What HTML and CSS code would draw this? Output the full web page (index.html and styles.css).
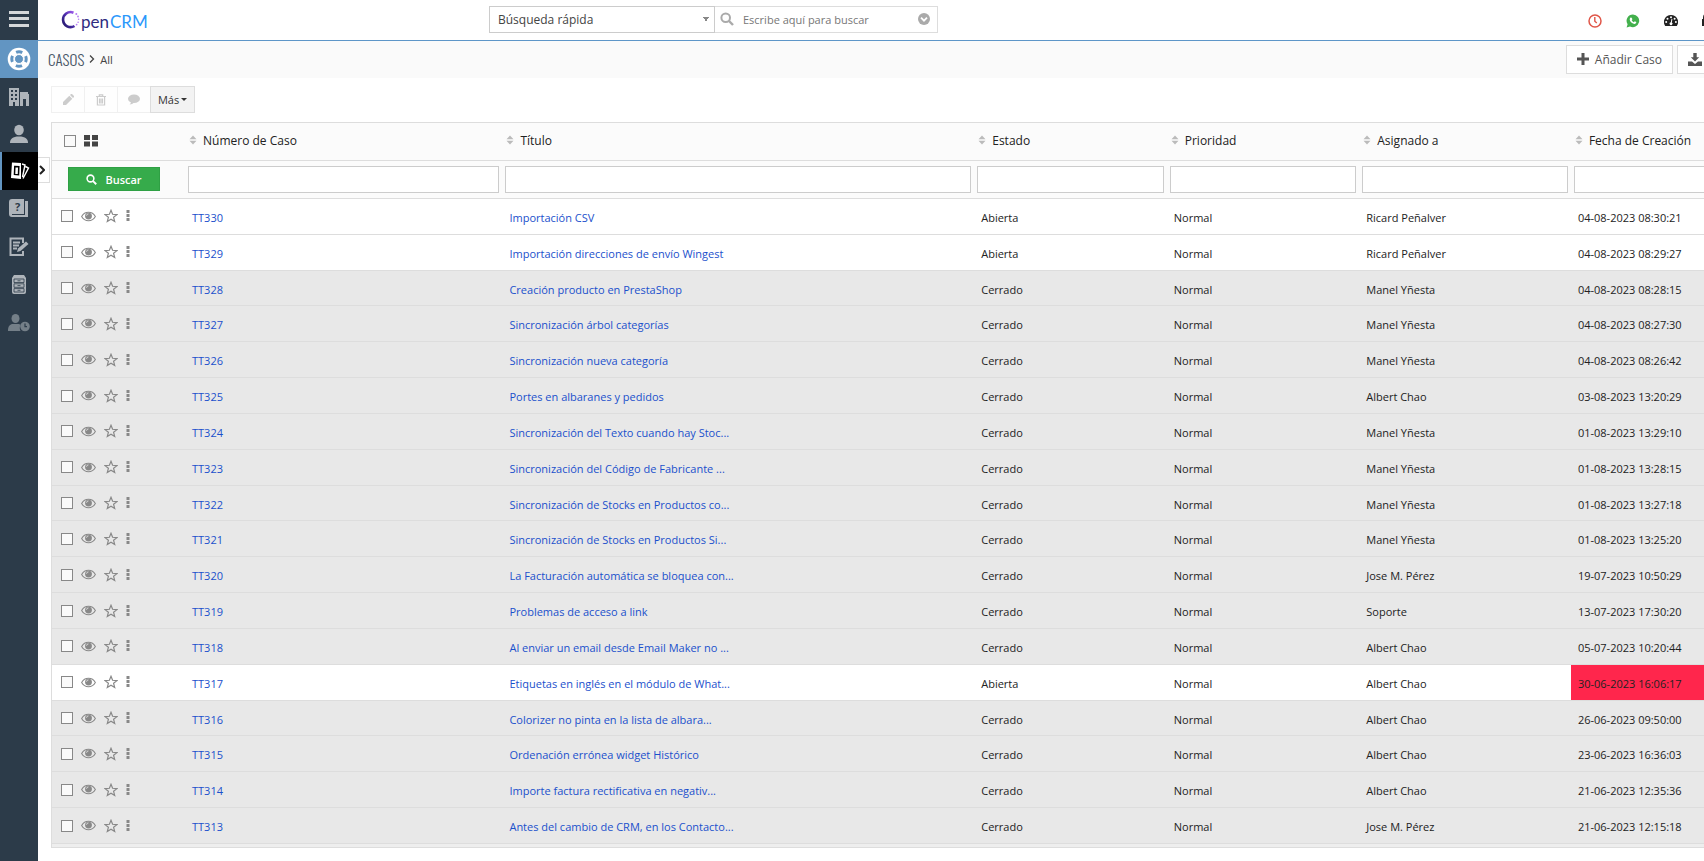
FILE: index.html
```html
<!DOCTYPE html>
<html lang="es">
<head>
    <meta charset="UTF-8">
    <meta name="viewport" content="width=device-width, initial-scale=1.0">
    <title>OpenCRM - Casos</title>
    <link rel="stylesheet" href="styles.css">
</head>
<body>

    <!-- Iconos -->
    <svg class="sprite" aria-hidden="true">
        <symbol id="i-eye" viewBox="0 0 14 10"><path fill="none" stroke="currentColor" d="M.6 5C3.500-.2 10.500-.2 13.400 5 10.500 10.200 3.500 10.200.6 5z"/><circle cx="7" cy="4.600" r="3.200" fill="currentColor"/><path d="M5.200 4.200C5.300 3.200 6 2.700 6.900 2.600" fill="none" stroke="#fff" stroke-width=".7"/></symbol>
        <symbol id="i-star" viewBox="0 0 14 14"><path fill="none" stroke="currentColor" stroke-width="1.200" d="M7 1.300l1.600 4 4.300.3-3.300 2.700 1.100 4.200L7 10.200l-3.700 2.300 1.100-4.200L1.100 5.600l4.300-.3z"/></symbol>
        <symbol id="i-dots" viewBox="0 0 4 12"><path fill="currentColor" d="M.5 0h3v3h-3zM.5 4h3v3h-3zM.5 8h3v3h-3z"/></symbol>
        <symbol id="i-sort" viewBox="0 0 8 10"><path fill="#bbb" d="M4 .5L7.500 4.200h-7zM4 9.500L.5 5.800h7z"/></symbol>
        <symbol id="i-search" viewBox="0 0 14 14"><circle cx="5.700" cy="5.700" r="4.300" fill="none" stroke="currentColor" stroke-width="2"/><path d="M9 9l4 4" stroke="currentColor" stroke-width="2.400"/></symbol>
    </svg>

    <nav class="sidebar">
        <button class="side-item menu" aria-label="Menú"><svg width="22" height="18" viewBox="0 0 22 18"><path fill="currentColor" d="M1 1h20v3H1zM1 7h20v3H1zM1 14h20v3H1z"/></svg></button>
        <a href="#" class="side-item active" aria-label="Soporte">
            <svg width="24" height="24" viewBox="0 0 24 24"><circle cx="12" cy="12" r="11.300" fill="#fff"/><circle cx="12" cy="12" r="7.200" fill="none" stroke="#6295c2" stroke-width="3" stroke-dasharray="6.300 5.010" stroke-dashoffset="3.150"/><circle cx="12" cy="12" r="4.500" fill="#6295c2" stroke="#fff"/></svg>
        </a>
        <a href="#" class="side-item" aria-label="Cuentas">
            <svg width="20" height="20" viewBox="0 0 20 20"><path fill="currentColor" fill-rule="evenodd" d="M0 1h10v18H0zM2 3v2h2V3zM6 3v2h2V3zM2 7v2h2V7zM6 7v2h2V7zM2 11v2h2v-2zM6 11v2h2v-2zM4 15v4h2v-4zM11 7V5h8v2h1v12h-3v-7h-3v7h-3z"/></svg>
        </a>
        <a href="#" class="side-item" aria-label="Contactos">
            <svg width="20" height="20" viewBox="0 0 20 20"><ellipse cx="10" cy="6" rx="4.800" ry="5.200" fill="currentColor"/><path fill="currentColor" d="M1 19c0-4 2.500-6.500 9-6.500s9 2.500 9 6.500z"/></svg>
        </a>
        <div class="side-item current">
            <a href="#" aria-label="Casos"><svg width="20" height="20" viewBox="0 0 20 20"><path fill="#fff" d="M2 1.500l9 .5v16l-10-1z"/><path fill="none" stroke="#000" stroke-width="1.500" d="M4.800 5.500l4 .2-.3 8-4-.3z"/><path fill="none" stroke="#fff" stroke-width="1.400" d="M12 3l3 1-2.500 12M15.500 5.500l3 1.500L13 17.500"/></svg></a>
            <button class="expand" aria-label="Expandir"><svg width="6" height="10" viewBox="0 0 6 10"><path d="M1 1l4 4-4 4" fill="none" stroke="#222" stroke-width="2"/></svg></button>
        </div>
        <a href="#" class="side-item" aria-label="Ayuda">
            <svg width="20" height="20" viewBox="0 0 20 20"><path fill="currentColor" d="M3 0h12v15H3v1h13V2h3v16H3q-3 0-3-3V3q0-3 3-3z"/><text x="6" y="12" class="help-mark">?</text></svg>
        </a>
        <a href="#" class="side-item" aria-label="Documentos">
            <svg width="20" height="20" viewBox="0 0 20 20"><path fill="none" stroke="currentColor" stroke-width="2" d="M14 14v4H1.500V1.500H14V6M4 5.500h7M4 8.500h6M4 11.500h4"/><path fill="currentColor" d="M8 15l1-3.500 8-7 2.500 2.500L11.500 14z"/></svg>
        </a>
        <a href="#" class="side-item" aria-label="Archivo">
            <svg width="18" height="20" viewBox="0 0 18 20"><path fill="currentColor" d="M4 0h10l2 3v14q0 2-2 2H4q-2 0-2-2V3z"/><path fill="none" stroke="#2c3b49" stroke-width=".8" d="M4 4h10v3.500H4zM4 8.800h10v3.500H4zM4 13.600h10V17H4zM7.500 5.800h3M7.500 10.600h3M7.500 15.300h3"/></svg>
        </a>
        <a href="#" class="side-item dim" aria-label="Usuarios">
            <svg width="22" height="18" viewBox="0 0 22 18"><ellipse cx="7.500" cy="4.500" rx="4" ry="4.500" fill="currentColor"/><path fill="currentColor" d="M0 17c0-5 2-7 5-7h5c1 0 2 .3 2.500 1-1 2-1 4 0 6z"/><circle cx="17" cy="12.500" r="4.800" fill="currentColor"/><path d="M17 9.500v3.200h2" fill="none" stroke="#2c3b49" stroke-width="1.200"/></svg>
        </a>
    </nav>

    <div class="page">
        <header class="topbar">
            <a href="#" class="logo">
                <svg width="20" height="20" viewBox="0 0 20 20">
                    <defs><linearGradient id="lg" x1="0" y1="1" x2="1" y2="0"><stop offset="0" stop-color="#211a66"/><stop offset=".5" stop-color="#4a2ba8"/><stop offset="1" stop-color="#a35cf0"/></linearGradient></defs>
                    <path d="M12.500 2.700A7.500 7.500 0 1 0 13.500 16" fill="none" stroke="url(#lg)" stroke-width="2.600"/>
                    <g fill="#b57cf2"><circle cx="15.300" cy="4" r="1"/><circle cx="17" cy="6.500" r=".9"/><circle cx="17.600" cy="9.300" r=".8"/><circle cx="17.100" cy="12.200" r=".8"/><circle cx="15.600" cy="14.600" r=".9"/></g>
                </svg>
                <span class="logo-pen">pen</span><span class="logo-crm">CRM</span>
            </a>
            <form class="search">
                <select class="search-type" aria-label="Tipo de búsqueda"><option>Búsqueda rápida</option></select>
                <label class="search-box">
                    <svg width="14" height="14"><use href="#i-search"/></svg>
                    <input type="text" placeholder="Escribe aquí para buscar" aria-label="Buscar">
                    <svg width="12" height="12" viewBox="0 0 12 12"><circle cx="6" cy="6" r="6" fill="#aaa"/><path d="M3 4.700l3 3 3-3" fill="none" stroke="#fff" stroke-width="1.800"/></svg>
                </label>
            </form>
            <div class="top-icons">
                <a href="#" aria-label="Reloj"><svg width="14" height="14" viewBox="0 0 14 14"><circle cx="7" cy="7" r="6" fill="none" stroke="#e05648" stroke-width="1.500"/><path d="M6.800 3v4.300l2 1.700" fill="none" stroke="#e05648" stroke-width="1.400"/></svg></a>
                <a href="#" aria-label="WhatsApp"><svg width="14" height="14" viewBox="0 0 14 14"><path fill="#43b04d" d="M7 .5A6.300 6.300 0 1 1 4 12.400L.6 13.500l1-3.300A6.300 6.300 0 0 1 7 .5z"/><path fill="#fff" d="M4.600 3.600l1.100.1.700 1.600-.7.900c.5 1 1.200 1.600 2.200 2l.8-.9 1.600.8c.1 1.300-.9 1.900-2 1.800C5.700 9.500 3.900 7.500 3.700 5.500c0-.9.400-1.500.9-1.900z"/></svg></a>
                <a href="#" aria-label="Panel"><svg width="14" height="12" viewBox="0 0 14 12"><path fill="#222" d="M7 0a7 7 0 0 1 5.800 11H1.200A7 7 0 0 1 7 0z"/><g fill="#fff"><circle cx="7" cy="2.200" r="1"/><circle cx="3.500" cy="3.700" r="1"/><circle cx="10.600" cy="3.700" r="1"/><circle cx="2.200" cy="7" r="1"/><circle cx="11.900" cy="7" r="1"/><path d="M7.500 3.800l.9.300-.6 3.300a1.500 1.500 0 1 1-1-.2z"/></g></svg></a>
                <a href="#" aria-label="Bloquear"><svg width="12" height="14" viewBox="0 0 12 14"><path fill="#222" d="M0 5h10v7H0z"/><path d="M2 6V3.500a3 3 0 0 1 6 0V6" fill="none" stroke="#222" stroke-width="2"/></svg></a>
            </div>
        </header>

        <div class="crumbs">
            <a href="#" class="module">CASOS</a>
            <svg width="6" height="8" viewBox="0 0 6 8"><path d="M1 .5l3.500 3.500L1 7.500" fill="none" stroke="#444" stroke-width="1.300"/></svg>
            <a href="#" class="view">All</a>
            <div class="actions">
                <button class="btn"><svg width="12" height="12" viewBox="0 0 12 12"><path fill="currentColor" d="M4.500 0h3v4.500H12v3H7.500V12h-3V7.500H0v-3h4.500z"/></svg>Añadir Caso</button>
                <button class="btn" aria-label="Importar"><svg width="14" height="13" viewBox="0 0 14 13"><path fill="currentColor" d="M5.300 0h3.400v4.300h2.500L7 8.600 2.800 4.300h2.500zM0 8.500h4l3 2.500 3-2.500h4V13H0z"/></svg></button>
            </div>
        </div>

        <main class="content">
            <div class="toolbar">
                <button disabled aria-label="Editar"><svg width="12" height="12" viewBox="0 0 12 12"><path fill="currentColor" d="M1 8l6.300-6.300 3 3L4 11H1zM8 1l1-1h1l2 2v1l-1 1z"/></svg></button>
                <button disabled aria-label="Eliminar"><svg width="10" height="12" viewBox="0 0 10 12"><path fill="none" stroke="currentColor" stroke-width="1.200" d="M0 2.500h10M3.300 2V.8h3.400V2M1.400 3v8h7.200V3M3.500 4.500v5M5 4.500v5M6.500 4.500v5"/></svg></button>
                <button disabled aria-label="Comentar"><svg width="12" height="11" viewBox="0 0 12 11"><ellipse cx="6" cy="4.800" rx="6" ry="4.300" fill="currentColor"/><path fill="currentColor" d="M3 7.500c0 1.500-.6 2.300-1.500 3 2 0 3.500-.7 4.500-2z"/></svg></button>
                <button class="more">Más <span class="caret"></span></button>
            </div>

            <div class="table-wrap">
                <table class="cases">
                    <colgroup>
                        <col class="c-tools"><col class="c-num"><col class="c-title"><col class="c-state"><col class="c-state"><col class="c-user"><col>
                    </colgroup>
                    <thead>
                        <tr class="heads">
                            <th>
                                <div class="tools head-tools">
                                    <input type="checkbox" aria-label="Seleccionar todo">
                                    <svg width="14" height="12" viewBox="0 0 14 12"><path fill="#444" d="M0 0h6v5H0zM8 0h6v5H8zM0 6.500h6v5H0zM8 6.500h6v5H8z"/></svg>
                                </div>
                            </th>
                            <th><svg class="sort"><use href="#i-sort"/></svg>Número de Caso</th>
                            <th><svg class="sort"><use href="#i-sort"/></svg>Título</th>
                            <th><svg class="sort"><use href="#i-sort"/></svg>Estado</th>
                            <th><svg class="sort"><use href="#i-sort"/></svg>Prioridad</th>
                            <th><svg class="sort"><use href="#i-sort"/></svg>Asignado a</th>
                            <th><svg class="sort"><use href="#i-sort"/></svg>Fecha de Creación</th>
                        </tr>
                        <tr class="filters">
                            <td><button class="go"><svg width="11" height="11" viewBox="0 0 14 14"><use href="#i-search"/></svg>Buscar</button></td>
                            <td><input type="text" aria-label="Número de Caso"></td>
                            <td><input type="text" aria-label="Título"></td>
                            <td><input type="text" aria-label="Estado"></td>
                            <td><input type="text" aria-label="Prioridad"></td>
                            <td><input type="text" aria-label="Asignado a"></td>
                            <td><input type="text" aria-label="Fecha de Creación"></td>
                        </tr>
                    </thead>
                    <tbody id="filas"></tbody>
                    <tfoot><tr><td colspan="7"></td></tr></tfoot>
                </table>
            </div>
        </main>
    </div>

    <script>
        const casos = [
            ["TT330", "Importación CSV", "Abierta", "Ricard Peñalver", "04-08-2023 08:30:21"],
            ["TT329", "Importación direcciones de envío Wingest", "Abierta", "Ricard Peñalver", "04-08-2023 08:29:27"],
            ["TT328", "Creación producto en PrestaShop", "Cerrado", "Manel Yñesta", "04-08-2023 08:28:15"],
            ["TT327", "Sincronización árbol categorías", "Cerrado", "Manel Yñesta", "04-08-2023 08:27:30"],
            ["TT326", "Sincronización nueva categoría", "Cerrado", "Manel Yñesta", "04-08-2023 08:26:42"],
            ["TT325", "Portes en albaranes y pedidos", "Cerrado", "Albert Chao", "03-08-2023 13:20:29"],
            ["TT324", "Sincronización del Texto cuando hay Stoc...", "Cerrado", "Manel Yñesta", "01-08-2023 13:29:10"],
            ["TT323", "Sincronización del Código de Fabricante ...", "Cerrado", "Manel Yñesta", "01-08-2023 13:28:15"],
            ["TT322", "Sincronización de Stocks en Productos co...", "Cerrado", "Manel Yñesta", "01-08-2023 13:27:18"],
            ["TT321", "Sincronización de Stocks en Productos Si...", "Cerrado", "Manel Yñesta", "01-08-2023 13:25:20"],
            ["TT320", "La Facturación automática se bloquea con...", "Cerrado", "Jose M. Pérez", "19-07-2023 10:50:29"],
            ["TT319", "Problemas de acceso a link", "Cerrado", "Soporte", "13-07-2023 17:30:20"],
            ["TT318", "Al enviar un email desde Email Maker no ...", "Cerrado", "Albert Chao", "05-07-2023 10:20:44"],
            ["TT317", "Etiquetas en inglés en el módulo de What...", "Abierta", "Albert Chao", "30-06-2023 16:06:17", true],
            ["TT316", "Colorizer no pinta en la lista de albara...", "Cerrado", "Albert Chao", "26-06-2023 09:50:00"],
            ["TT315", "Ordenación errónea widget Histórico", "Cerrado", "Albert Chao", "23-06-2023 16:36:03"],
            ["TT314", "Importe factura rectificativa en negativ...", "Cerrado", "Albert Chao", "21-06-2023 12:35:36"],
            ["TT313", "Antes del cambio de CRM, en los Contacto...", "Cerrado", "Jose M. Pérez", "21-06-2023 12:15:18"]
        ];

        document.getElementById("filas").innerHTML = casos.map(([num, titulo, estado, usuario, fecha, vencido]) => `
            <tr class="${estado === "Cerrado" ? "closed" : ""}">
                <td><div class="tools">
                    <input type="checkbox" aria-label="Seleccionar ${num}">
                    <svg class="eye"><use href="#i-eye"/></svg>
                    <svg class="star"><use href="#i-star"/></svg>
                    <svg class="dots"><use href="#i-dots"/></svg>
                </div></td>
                <td><a href="#">${num}</a></td>
                <td><a href="#">${titulo}</a></td>
                <td>${estado}</td>
                <td>Normal</td>
                <td>${usuario}</td>
                <td class="${vencido ? "overdue" : ""}">${fecha}</td>
            </tr>`).join("");
    </script>

</body>
</html>
```
FILE: styles.css
```css
* {
    box-sizing: border-box;
}

body {
    margin: 0;
    height: 100vh;
    display: flex;
    overflow: hidden;
    background: #fff;
    color: #222;
    font-family: "Open Sans", "Noto Sans", sans-serif;
    font-size: 11px;
}

a {
    color: inherit;
    text-decoration: none;
}

button, input, select {
    font-family: inherit;
    margin: 0;
}

svg {
    flex: none;
    display: block;
}

.sprite {
    position: absolute;
    width: 0;
    height: 0;
}

/* menu lateral */
.sidebar {
    width: 38px;
    flex: none;
    background: #2c3b49;
}

.side-item {
    display: flex;
    align-items: center;
    justify-content: center;
    position: relative;
    width: 100%;
    height: 37px;
    padding: 0;
    border: 0;
    background: none;
    color: #aeb4ba;
}

.menu {
    height: 40px;
    padding-bottom: 2px;
    color: #d5d8da;
}

.active, .current, .current ~ .side-item {
    height: 38px;
}

.active {
    background: #6295c2;
}

.current {
    background: #000;
    border-left: 2px solid #6295c2;
}

.dim {
    color: #747f88;
}

.help-mark {
    font-size: 11px;
    font-weight: bold;
    fill: #2c3b49;
}

.expand {
    position: absolute;
    left: 100%;
    top: 5px;
    width: 12px;
    height: 26px;
    padding: 0 0 0 1px;
    background: #fff;
    border: 1px solid #ddd;
    border-left: 0;
}

.page {
    flex: 1;
    min-width: 0;
    display: flex;
    flex-direction: column;
}

/* cabecera */
.topbar {
    display: flex;
    align-items: center;
    height: 41px;
    border-bottom: 1px solid #5d96c8;
}

.logo {
    display: flex;
    align-items: center;
    width: 451px;
    padding-left: 23px;
    font-family: Lato, sans-serif;
    font-size: 17px;
}

.logo-pen {
    color: #2f2c80;
    padding-top: 3px;
}

.logo-crm {
    color: #2b98fb;
    padding: 3px 0 0 1px;
}

.search {
    display: flex;
    height: 27px;
    margin-bottom: 2px;
}

.search-type {
    appearance: none;
    width: 226px;
    padding: 0 8px;
    border: 1px solid #ccc;
    border-radius: 0;
    background: conic-gradient(from -30deg at 50% 100%, #888 60deg, #fff 0) no-repeat right 5px center / 6px 5px;
    color: #444;
    font-size: 12px;
}

.search-box {
    display: flex;
    align-items: center;
    width: 223px;
    padding: 0 7px 0 5px;
    border: 1px solid #ddd;
    border-left: 0;
    color: #aaa;
}

.search-box input {
    flex: 1;
    min-width: 0;
    padding: 0 0 0 9px;
    border: 0;
    background: none;
    font-size: 11px;
}

.search-box input::placeholder {
    color: #777;
}

.top-icons {
    display: flex;
    align-items: center;
    gap: 24px;
    margin-left: auto;
    margin-right: -10px;
    padding-top: 2px;
}

.crumbs {
    display: flex;
    align-items: center;
    height: 37px;
    padding: 0 0 1px 10px;
    background: #fafafa;
    color: #444;
    gap: 5px;
}

.module {
    font-family: Oswald, "Open Sans Condensed", "Liberation Sans Narrow", "Open Sans", sans-serif;
    font-size: 15px;
    font-weight: 300;
    color: #485465;
}

.actions {
    display: flex;
    gap: 4px;
    margin-left: auto;
    margin-right: -9px;
}

.btn {
    display: flex;
    align-items: center;
    gap: 6px;
    height: 29px;
    padding: 0 10px;
    border: 1px solid #ddd;
    background: #fff;
    color: #555;
    font-size: 12px;
}

.content {
    flex: 1;
    min-height: 0;
    display: flex;
    flex-direction: column;
    padding: 8px 0 13px 13px;
}

.toolbar {
    display: flex;
    margin-bottom: 9px;
}

.toolbar button {
    display: flex;
    align-items: center;
    justify-content: center;
    width: 33px;
    height: 27px;
    padding: 0;
    border: 1px solid #f0f0f0;
    border-right: 0;
    background: #fefefe;
    color: #ccc;
}

.toolbar .more {
    width: 45px;
    gap: 2px;
    border: 1px solid #ddd;
    background: #f3f3f3;
    color: #333;
    font-size: 11px;
}

.caret {
    border: 3px solid transparent;
    border-top-color: #333;
    border-bottom: 0;
}

/* tabla de casos */
.table-wrap {
    flex: 1;
    min-height: 0;
    overflow: hidden;
    border: 1px solid #ddd;
    border-right: 0;
}

.cases {
    width: 105%;
    height: 100%;
    table-layout: fixed;
    border-spacing: 0;
}

.c-tools { width: 133px; }
.c-num { width: 18.3%; }
.c-title { width: 27.2%; }
.c-state { width: 11.1%; }
.c-user { width: 12.2%; }

.cases th, .cases td {
    padding: 2px 7px 0;
    text-align: left;
    white-space: nowrap;
    border-bottom: 1px solid #ddd;
}

.cases .heads th {
    height: 38px;
    padding: 0 4px 2px;
    background: #fbfbfb;
    color: #222;
    font-size: 12px;
    font-weight: 500;
}

.cases .filters td {
    height: 38px;
    padding: 0 3px 1px;
    background: #fbfbfb;
}

.filters input {
    display: block;
    width: 100%;
    height: 27px;
    border: 1px solid #ccc;
}

.sort {
    display: inline-block;
    width: 8px;
    height: 10px;
    margin-right: 6px;
}

.go {
    display: flex;
    align-items: center;
    justify-content: center;
    gap: 8px;
    width: 92px;
    height: 24px;
    margin-left: 13px;
    border: 1px solid #2fa044;
    background: #36ab4b;
    color: #fff;
    font-size: 11px;
    font-weight: 600;
}

.cases tbody td:first-child {
    padding-top: 0;
}

.cases a {
    color: #1a50cc;
}

.closed {
    background: #e8e8e8;
}

.cases .overdue {
    background: #ff264c;
}

.tools {
    display: flex;
    align-items: center;
    gap: 8px;
    padding-left: 2px;
    color: #888;
}

.head-tools {
    padding-left: 8px;
}

.tools input {
    appearance: none;
    width: 12px;
    height: 12px;
    border: 1px solid #888;
    background: #fafafa;
}

.eye {
    width: 15px;
    height: 11px;
}

.star {
    width: 14px;
    height: 14px;
}

.dots {
    width: 4px;
    height: 12px;
}

.cases tfoot td {
    height: 3px;
    padding: 0;
    border: 0;
    background: #eee;
}
```
